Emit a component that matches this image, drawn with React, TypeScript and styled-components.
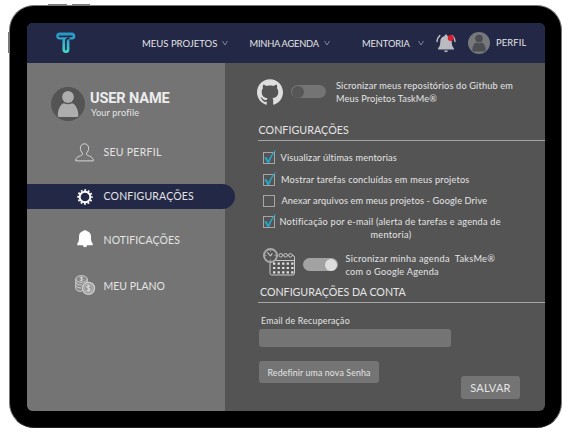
import React from 'react';
import styled, { createGlobalStyle } from 'styled-components';
import { SiGithub } from 'react-icons/si';

const GlobalStyle = createGlobalStyle`
  * { box-sizing: border-box; }
  body {
    margin: 0;
    background: #fff;
    font-family: Lato, "Liberation Sans", sans-serif;
    color: #e4e4e4;
    overflow: hidden;
  }
  svg { display: block; flex: none; overflow: visible; }
  button, input { font: inherit; color: inherit; border: 0; padding: 0; }
`;

const Stage = styled.div`
  width: 571px;
  height: 437px;
  padding: 5px 0 0 9px;
`;

const Tablet = styled.div`
  position: relative;
  width: 553px;
  height: 423px;
  padding: 17px 16px 16px 17px;
  border: 1px solid #77797b;
  border-bottom-color: #222;
  border-radius: 25px;
  background: #000;
`;

const HardwareKey = styled.span<{ $side: 'top' | 'left'; $at: number; $length: number }>`
  position: absolute;
  background: #77797b;
  ${(p) =>
    p.$side === 'top'
      ? `top: -2px; left: ${p.$at}px; width: ${p.$length}px; height: 1px;`
      : `left: -2px; top: ${p.$at}px; height: ${p.$length}px; width: 1px;`}
`;

const Screen = styled.div`
  display: flex;
  flex-direction: column;
  width: 518px;
  height: 388px;
  border-radius: 6px;
  overflow: hidden;
  background: #545454;
`;

const Label = styled.span<{ $size?: number; $tracking?: number; $line?: number }>`
  display: block;
  white-space: pre;
  font-size: ${(p) => p.$size ?? 9.2}px;
  line-height: ${(p) => p.$line ?? 13}px;
  letter-spacing: ${(p) => p.$tracking ?? 0}px;
`;

const Header = styled.header`
  display: flex;
  align-items: center;
  height: 40px;
  flex: none;
  background: #232847;
  padding-left: 29px;
`;

const NavItem = styled.a<{ $width: number; $gap: number }>`
  display: flex;
  align-items: center;
  gap: ${(p) => p.$gap}px;
  width: ${(p) => p.$width}px;
`;

const NavList = styled.nav`
  display: flex;
  margin-left: 66px;
`;

const ProfileLink = styled.a`
  display: flex;
  align-items: center;
  gap: 6px;
  margin-left: 12px;
  margin-top: -1px;
  ${Label} { margin-top: -1px; }
`;

const Body = styled.div`
  display: flex;
  flex: 1;
`;

const Sidebar = styled.aside`
  display: flex;
  flex-direction: column;
  width: 198px;
  flex: none;
  background: #747474;
`;

const UserCard = styled.div`
  display: flex;
  gap: 5px;
  height: 57px;
  margin: 24px 0 0 24px;
`;

const UserText = styled.div`
  padding-top: 3px;
`;

const UserName = styled.strong`
  display: block;
  font: bold 14.6px/16px Roboto, sans-serif;
  letter-spacing: -0.15px;
  white-space: nowrap;
  color: #ececec;
`;

const Menu = styled.ul`
  list-style: none;
  margin: 0;
  padding: 0;
  display: flex;
  flex-direction: column;
`;

const MenuItem = styled.li<{ $active?: boolean; $height: number }>`
  display: flex;
  align-items: center;
  height: ${(p) => p.$height}px;
  width: ${(p) => (p.$active ? 208 : 198)}px;
  padding-left: 45px;
  border-radius: 0 13px 13px 0;
  background: ${(p) => (p.$active ? '#232847' : 'transparent')};
`;

const IconSlot = styled.span`
  display: flex;
  justify-content: center;
  width: 25px;
  margin-right: 6.5px;
`;

const Main = styled.main`
  flex: 1;
  display: flex;
  flex-direction: column;
  padding: 16px 0 0 31px;
`;

const SyncRow = styled.div<{ $height: number; $inset: number }>`
  display: flex;
  height: ${(p) => p.$height}px;
  padding-left: ${(p) => p.$inset}px;
`;

const Switch = styled.button<{ $on?: boolean }>`
  display: flex;
  align-items: center;
  justify-content: ${(p) => (p.$on ? 'flex-end' : 'flex-start')};
  width: 35px;
  height: 13px;
  margin: ${(p) => (p.$on ? '6px 7.5px 0 7px' : '6px 10px 0 8px')};
  padding: 0 1px;
  border-radius: 7px;
  background: ${(p) => (p.$on ? '#a2a2a2' : '#747474')};
  &::before {
    content: '';
    width: 12px;
    height: 12px;
    border-radius: 50%;
    background: ${(p) => (p.$on ? '#dedede' : '#565656')};
  }
`;

const SectionTitle = styled.h2<{ $indent: number }>`
  margin: 0 0 0 2px;
  height: 19px;
  padding-left: ${(p) => p.$indent}px;
  border-bottom: 1px solid #a6a6a6;
  font-weight: 400;
  flex: none;
`;

const Options = styled.div`
  height: 107px;
  padding: 10px 0 0 7px;
`;

const Option = styled.label<{ $height: number; $gap: number }>`
  display: flex;
  gap: ${(p) => p.$gap}px;
  height: ${(p) => p.$height}px;
`;

const Box = styled.span`
  display: flex;
  width: 12px;
  height: 12px;
  margin-top: 1px;
  border: 1px solid #a6a6a6;
  flex: none;
`;

const Form = styled.form`
  display: flex;
  flex-direction: column;
  align-items: flex-start;
  padding: 12px 0 0 3px;
`;

const EmailInput = styled.input`
  width: 192px;
  height: 18px;
  margin: 2px 0 14px;
  border-radius: 3px;
  background: #747474;
`;

const Actions = styled.div`
  display: flex;
  width: 261px;
  justify-content: space-between;
`;

const Button = styled.button<{ $width: number; $height: number; $drop?: number }>`
  display: flex;
  align-items: center;
  justify-content: center;
  width: ${(p) => p.$width}px;
  height: ${(p) => p.$height}px;
  margin-top: ${(p) => p.$drop ?? 0}px;
  border-radius: 3px;
  background: #747474;
`;

const Indent = styled.div<{ $left?: number; $top?: number }>`
  padding: ${(p) => p.$top ?? 0}px 0 0 ${(p) => p.$left ?? 0}px;
`;

const Chevron = () => (
  <svg width="6" height="6" viewBox="0 0 6 6" fill="none" stroke="#8b8da0" strokeWidth="0.9">
    <path d="M.5 1 3 5 5.500 1" />
  </svg>
);

const Logo = () => (
  <svg width="20" height="22" viewBox="0 0 20 22" fill="none" strokeLinecap="round" strokeLinejoin="round">
    <defs>
      <linearGradient id="logo" x1="0" y1="0" x2="0" y2="22" gradientUnits="userSpaceOnUse">
        <stop offset="0" stopColor="#2793c8" />
        <stop offset="0.5" stopColor="#31b4cc" />
        <stop offset="1" stopColor="#48e0cc" />
      </linearGradient>
    </defs>
    <g stroke="url(#logo)" strokeWidth="7">
      <path d="M3.700 4.010 15.800 4" />
      <path d="M9.900 9 9.910 17.500" />
    </g>
    <g stroke="#232847" strokeWidth="1.700">
      <path d="M3.500 4.400H15.800" />
      <path d="M9.900 17.500V9.500q0-3 3-3.400" />
    </g>
  </svg>
);

const Avatar = ({ size, back, figure }: { size: number; back: string; figure: string }) => (
  <svg width={size} height={size} viewBox="0 0 34 34">
    <circle cx="17" cy="17" r="17" fill={back} />
    <circle cx="17" cy="10" r="5.900" fill={figure} />
    <path fill={figure} d="M6.800 28.500C6.800 21 10.500 16.400 13 16.200q4 2 8 0c2.500.2 6.400 4.800 6.400 12.300q0 1.600-1.700 1.600H8.500q-1.700 0-1.700-1.600Z" />
  </svg>
);

const RingingBell = () => (
  <svg width="20" height="19" viewBox="0 0 20 19">
    <path fill="#b9bbc1" d="M10 .5c.9 0 1.300.6 1.300 1.400 2.900.6 4.400 2.700 4.400 5.400 0 3.500.5 5.200 2.200 6.900v1.300H2.100v-1.300c1.700-1.700 2.200-3.400 2.200-6.900 0-2.700 1.500-4.800 4.400-5.400C8.700 1.100 9.100.5 10 .5ZM8.100 16.500h3.800a1.900 1.700 0 0 1-3.800 0Z" />
    <path fill="none" stroke="#b9bbc1" strokeWidth="1.500" strokeLinecap="round" d="M3.800 1.600Q1.300 3.800 1 7.500M16.200 1.600Q18.700 3.800 19 7.500" />
    <circle cx="14.700" cy="4" r="3" fill="#e01b2c" />
  </svg>
);

const PersonIcon = () => (
  <svg width="19" height="19" viewBox="0 0 19 19" fill="none" stroke="#d6d6d6" strokeWidth="1">
    <path d="M9.500.8c2.500 0 4.100 1.800 4.100 4.400 0 2-.8 3.700-2 4.800v1.700c0 .8 6.600 1.700 6.600 5.300v.9H.8V17c0-3.600 6.600-4.500 6.600-5.300V10c-1.200-1.100-2-2.800-2-4.800C5.400 2.600 7 .8 9.500.8Z" />
  </svg>
);

const GearIcon = () => (
  <svg width="16" height="16" viewBox="0 0 16 16" fill="none" stroke="#fff">
    <circle cx="8" cy="8" r="5.300" strokeWidth="1.900" />
    <circle cx="8" cy="8" r="6.900" strokeWidth="1.700" strokeDasharray="1.900 1.713" strokeDashoffset=".95" />
  </svg>
);

const BellIcon = () => (
  <svg width="16" height="18" viewBox="0 0 16 18" fill="#fff">
    <path d="M8 .3c1 0 1.500.4 1.700.8 2.900.7 4.300 2.700 4.300 5.500 0 3.800.2 5.600 1.700 7v1.600H.3v-1.600c1.500-1.400 1.700-3.200 1.700-7 0-2.800 1.400-4.800 4.300-5.500C6.500.7 7 .3 8 .3ZM6 15.200h4a2 2.100 0 0 1-4 0Z" />
  </svg>
);

const CoinsIcon = () => (
  <svg width="20" height="20" viewBox="0 0 20 20" fill="none" stroke="#d2d2d2" strokeWidth=".9">
    <path fill="#8b8b8b" d="M.7 4v9.500c0 1.700 2.500 3 5.500 3L12.300 9V4" />
    <ellipse cx="6.500" cy="4" rx="5.800" ry="3.400" fill="#8b8b8b" />
    <path d="M.7 7c.5 2 3 3 6.300 2.900M.7 10.200c.6 1.700 2.700 2.800 5.300 2.800M7.900 2.400C6 1.600 4.800 2.400 5.400 3.200s2.800.5 2.600 1.400S6 5.800 4.900 5.300M6.500 1.400v5.200" />
    <circle cx="13.500" cy="13.300" r="6" fill="#929292" strokeWidth="1.300" />
    <circle cx="13.500" cy="13.300" r="4" strokeWidth=".6" />
    <path strokeWidth="1.200" d="M15.200 11.400c-1.400-1-3.500-.7-3.300.7.200 1.300 3.300.9 3.300 2.400s-2.400 1.500-3.500.5M13.500 9.900v6.800" />
  </svg>
);

const Tick = () => (
  <svg width="14" height="15" viewBox="0 0 14 15" fill="#2aa3c3">
    <path d="M.2 4.600 2.300 4.100 4.400 7Q7 1.500 11.300-3.200L11.700-2.500Q7.600 3.500 5.200 9.900L3.500 10Z" />
  </svg>
);

const CalendarIcon = () => (
  <svg width="33" height="29" viewBox="0 0 33 29" fill="none" stroke="#c8c8c8">
    <path strokeWidth="1" d="M14 7.500h-1M7 15v10.200q0 1.800 1.800 1.800h21q1.700 0 1.700-1.800V9.300q0-1.800-1.700-1.800H29M7.500 12.500h24M19.700 7.500h.8M24.500 7.500h1" />
    <circle cx="17.800" cy="7.300" r="1.800" />
    <circle cx="22.600" cy="7.300" r="1.800" />
    <circle cx="27.400" cy="7.300" r="1.800" />
    <path stroke="#e0e0e0" strokeWidth="2.200" strokeDasharray="2.300 2.250" d="M10 15.600h20.500M10 20h20.500M10 24.300h20.500" />
    <circle cx="7.500" cy="7.500" r="6.500" fill="#545454" stroke="#aaa" strokeWidth="2" />
    <path strokeWidth="1.100" d="m4.300 4.300 3.200 3.500 1.900-2.600" />
    <path strokeWidth=".9" d="M7.500 2.500v1M7.500 11.500v1M2.500 7.500h1M11.500 7.500h1" />
  </svg>
);

export default function App() {
  return (
    <>
      <GlobalStyle />
      <Stage>
        <Tablet>
          <HardwareKey $side="top" $at={38} $length={19} />
          <HardwareKey $side="top" $at={62} $length={18} />
          <HardwareKey $side="left" $at={26} $length={21} />
          <Screen>
            <Header>
              <Logo />
              <NavList>
                <NavItem $width={107.5} $gap={4.5}>
                  <Label $size={9.5}>MEUS PROJETOS</Label>
                  <Chevron />
                </NavItem>
                <NavItem $width={112.5} $gap={5}>
                  <Label $size={9.3} $tracking={-0.23}>MINHA AGENDA</Label>
                  <Chevron />
                </NavItem>
                <NavItem $width={74} $gap={8}>
                  <Label $size={9.3} $tracking={-0.1}>MENTORIA</Label>
                  <Chevron />
                </NavItem>
              </NavList>
              <RingingBell />
              <ProfileLink>
                <Avatar size={22} back="#77787b" figure="#4c4e53" />
                <Label $size={9.4} $tracking={0.12}>PERFIL</Label>
              </ProfileLink>
            </Header>
            <Body>
              <Sidebar>
                <UserCard>
                  <Avatar size={34} back="#545454" figure="#adadad" />
                  <UserText>
                    <UserName>USER NAME</UserName>
                    <Indent $left={1}>
                      <Label $size={9.2} $tracking={0.15}>Your profile</Label>
                    </Indent>
                  </UserText>
                </UserCard>
                <Menu>
                  <MenuItem $height={17}>
                    <IconSlot><PersonIcon /></IconSlot>
                    <Label $size={10.5} $tracking={0.27}>SEU PERFIL</Label>
                  </MenuItem>
                  <Indent $top={23} />
                  <MenuItem $height={25} $active>
                    <IconSlot><GearIcon /></IconSlot>
                    <Label $size={10.5} $tracking={0.18}>CONFIGURAÇÕES</Label>
                  </MenuItem>
                  <Indent $top={20} />
                  <MenuItem $height={20}>
                    <IconSlot><BellIcon /></IconSlot>
                    <Indent $top={2}><Label $size={10.5} $tracking={0.12}>NOTIFICAÇÕES</Label></Indent>
                  </MenuItem>
                  <Indent $top={26} />
                  <MenuItem $height={20}>
                    <IconSlot><CoinsIcon /></IconSlot>
                    <Indent $top={3}><Label $size={10.5}>MEU PLANO</Label></Indent>
                  </MenuItem>
                </Menu>
              </Sidebar>
              <Main>
                <SyncRow $height={43} $inset={1}>
                  <SiGithub size={26} color="#dedede" />
                  <Switch aria-label="Github" />
                  <div>
                    <Label $tracking={0.16}>Sicronizar meus repositórios do Github em</Label>
                    <Label $tracking={0.12}>Meus Projetos TaskMe®</Label>
                  </div>
                </SyncRow>
                <SectionTitle $indent={0.5}>
                  <Label $size={10.7} $line={16} $tracking={0.05}>CONFIGURAÇÕES</Label>
                </SectionTitle>
                <Options>
                  <Option $height={22} $gap={5.5}>
                    <Box><Tick /></Box>
                    <Label $tracking={0.16}>Visualizar últimas mentorias</Label>
                  </Option>
                  <Option $height={21} $gap={6}>
                    <Box><Tick /></Box>
                    <Label $tracking={0.19}>Mostrar tarefas concluídas em meus projetos</Label>
                  </Option>
                  <Option $height={21} $gap={6.5}>
                    <Box />
                    <Label $tracking={0.12}>Anexar arquivos em meus projetos - Google Drive</Label>
                  </Option>
                  <Option $height={26} $gap={4.5}>
                    <Box><Tick /></Box>
                    <div>
                      <Label $tracking={0.22}>Notificação por e-mail (alerta de tarefas e agenda de</Label>
                      <Indent $left={91}><Label $tracking={0.28}>mentoria)</Label></Indent>
                    </div>
                  </Option>
                </Options>
                <SyncRow $height={36} $inset={7}>
                  <CalendarIcon />
                  <Indent $top={4}><Switch $on aria-label="Google Agenda" /></Indent>
                  <Indent $top={4}>
                    <Label $tracking={0.3}>{'Sicronizar minha agenda  TaksMe®'}</Label>
                    <Label $tracking={0.26}>com o Google Agenda</Label>
                  </Indent>
                </SyncRow>
                <SectionTitle $indent={2}>
                  <Label $size={10.7} $line={16} $tracking={-0.03}>CONFIGURAÇÕES DA CONTA</Label>
                </SectionTitle>
                <Form>
                  <Indent $left={2}>
                    <Label $size={8.8} $line={12} $tracking={0.22}>Email de Recuperação</Label>
                  </Indent>
                  <EmailInput aria-label="Email de Recuperação" />
                  <Actions>
                    <Button type="button" $width={120} $height={22}>
                      <Label $size={8.8} $tracking={0.12}>Redefinir uma nova Senha</Label>
                    </Button>
                    <Button type="button" $width={59} $height={23} $drop={15}>
                      <Label $size={11} $tracking={0.2}>SALVAR</Label>
                    </Button>
                  </Actions>
                </Form>
              </Main>
            </Body>
          </Screen>
        </Tablet>
      </Stage>
    </>
  );
}
